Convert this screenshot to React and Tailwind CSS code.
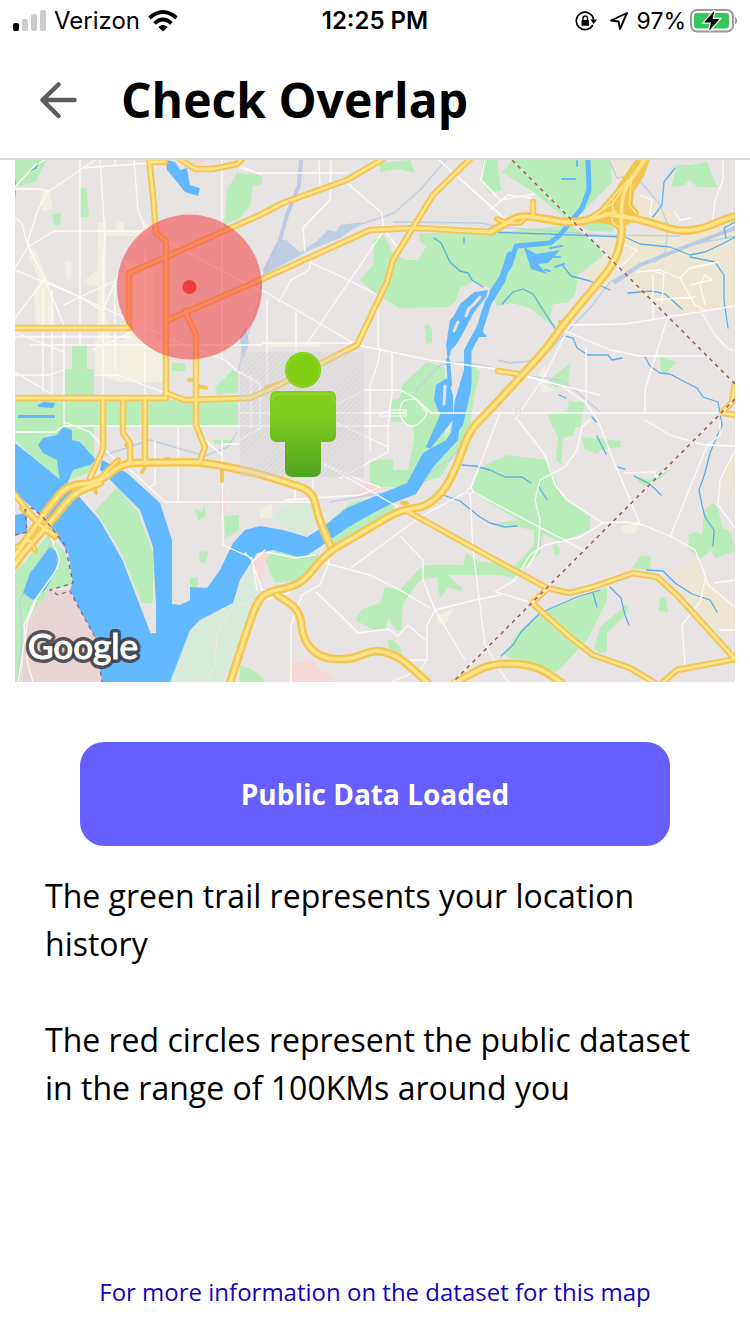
const parks = [
  "M15,160 H47 L35,182 L15,187Z",
  "M80,188 H86 L89,217 H80Z",
  "M52,214 L61,213 L60,226 L54,225Z",
  "M72,344 H87 V369 H94 V395 H65 V369 H72Z",
  "M15,400 H238 V427 H15Z",
  "M15,427 H94 V455 L90,472 L60,484 L54,478 L15,440Z",
  "M227,190 L237,173 L262,175 V184 L253,186 L250,205 L240,218 L224,225 L226,207Z",
  "M172,363 H185 V371 H172Z",
  "M215,387 L233,370 L238,373 V392 L217,395Z",
  "M379,163 L410,160 L415,173 L398,169 L380,172Z",
  "M374,240 L384,235 L392,252 L405,260 L418,260 L426,247 L419,240 L420,233 H490 L570,225 L600,245 L603,256 L578,275 L575,295 L567,303 L553,304 L550,318 L557,328 L548,322 L530,308 L512,303 L497,306 L490,288 L473,282 L460,288 L455,302 L448,307 L400,308 L377,295 L360,280 L373,265Z",
  "M502,172 L513,160 H610 L612,182 L580,215 L570,222 L533,192Z",
  "M483,160 H497 L501,190 L490,194 L481,180Z",
  "M575,222 L615,218 L613,232 L590,231Z",
  "M671,187 L677,165 L690,165 L707,162 L717,187 L697,187 L690,180 L683,186Z",
  "M670,245 L720,250 L718,256 L700,263 L685,256Z",
  "M425,325 L428,324 L432,330 L432,343 L426,344Z",
  "M547,382 L570,363 L568,385 L556,387Z",
  "M548,415 L567,410 L569,400 L575,402 L585,402 L580,427 H552Z",
  "M660,357 L677,362 L667,373 L661,373Z",
  "M391,400 L400,398 L402,385 L427,362 L445,368 V440 L428,460 L407,487 H370 V461 L393,459 V470 H408 L414,440 V428 L402,422 H391Z",
  "M470,362 L480,372 L473,402 L470,430 L455,455 L440,477 L418,484 L450,430Z",
  "M323,527 L350,503 L397,493 L393,510 L333,545Z",
  "M265,560 L275,550 L320,555 L307,580 L275,583Z",
  "M355,620 L362,609 L380,603 L385,587 L400,590 L420,568 L427,565 H463 L466,553 L480,562 L500,563 V575 L448,575 L462,588 L461,592 L448,587 L440,599 L437,577 L420,580 L403,603 L401,631 L396,630 L388,618 L386,630 H374Z",
  "M387,641 L393,640 L401,647 L402,657 L390,650Z",
  "M470,491 L480,468 L492,462 L507,455 L547,460 L563,497 L590,517 V530 L560,542 L535,530Z",
  "M550,420 H578 L573,435 L563,438 L561,465 L556,460 L558,437Z",
  "M582,437 L620,441 L621,447 L600,450 L597,454 L584,449Z",
  "M632,475 L650,480 L664,468 L670,470 L658,480 L645,487Z",
  "M490,524 L520,520 L543,533 L540,553 L513,578 L490,573 V563 L515,566 L534,545 V530 L510,526Z",
  "M552,545 L557,544 L560,551 L556,557Z",
  "M505,655 L517,633 L540,613 L607,587 V600 L587,640 L557,672 L530,668Z",
  "M594,648 L600,627 L627,604 L628,612 L607,633 V652 L600,653Z",
  "M632,568 L641,555 L651,557 L650,571Z",
  "M689,534 L696,532 L708,538 L711,550 L700,559 L688,548Z",
  "M704,513 L712,502 L718,508 L723,528 L731,532 L735,551 L715,558 L702,535Z",
  "M660,598 L666,597 L668,612 L659,611Z",
  "M195,508 L202,512 L205,504 V517 L198,521Z",
  "M224,516 L239,515 V530 L225,539Z",
  "M199,551 L209,552 L205,563 L200,562Z",
  "M190,578 L198,577 V587 H190Z",
  "M214,440 H231 V444 H214Z",
  "M240,665 L253,670 L264,679 V682 H240Z",
  "M15,573 L48,535 L66,553 L73,585 L50,590 L24,625 L20,682 H15Z",
];

const blocks = [
  ["#f2eee1", "M42,190 L49,189 L53,208 L43,211 L40,203Z M98,223 H106 V231 H115 L118,222 H124 V231 H142 L143,222 L150,226 V236 H106 L106,320 L110,325 V342 H98Z M28,247 L36,250 L46,276 L50,290 L54,310 V330 H36 L34,295 L39,280 L29,256Z M65,261 L72,262 L71,280 L66,278Z M85,280 L97,270 L100,285 L90,285Z M95,340 H165 V382 H118 L95,372Z M125,260 L155,270 V340 H125Z M268,342 H320 V347 H268Z M538,375 L546,364 L545,385 L556,390 L541,393Z M260,510 L272,503 V518 H260Z M437,615 L453,609 L446,623 L437,625Z M622,526 L641,521 L635,534 L623,532Z"],
  ["#ece6d2", "M600,240 L625,234 L735,228 V307 L685,313 L640,297 L615,265Z M610,162 H635 L622,185 L614,180Z M634,190 L665,208 L680,222 L633,218Z M672,575 L695,558 L707,580 L735,607 V634 L720,632 L695,605Z M725,465 L735,455 V495 L721,493Z M585,275 L610,250 L618,275 L600,290Z"],
  ["#f6d8d7", "M157,228 L164,220 L172,231 L160,234Z M292,663 L310,660 L337,682 H292Z M193,160 H205 L203,165 H193Z M350,492 L370,482 L378,487 L372,497Z M250,560 L268,548 L262,582 L254,577Z M219,489 H225 V515 H219Z"],
  ["#e8d3d5", "M50,590 L70,590 L80,610 L95,637 L102,682 H22 L25,625Z"],
  ["#d8ead9", "M170,682 L190,630 L233,603 L253,563 L257,600 L230,682Z M272,517 L290,503 H313 L320,520 L307,535 L294,533Z"],
];

const water = [
  "M15,443 L58,478 L80,497 L100,520 L123,560 L151,633 H156 V605 L153,547 L140,510 L117,487 L100,470 L102,460 L127,473 L160,503 L172,540 V604 L180,605 L190,600 V587 L207,588 L220,570 L233,543 L245,530 L260,526 L283,530 L307,537 L323,527 L347,508 L373,497 L407,483 L423,453 L446,440 L460,420 L458,440 L434,466 L416,494 L393,503 L373,513 L347,528 L323,545 L303,558 L273,550 L257,553 L240,580 L233,603 L200,620 L190,630 L170,682 H102 L95,637 L80,610 L70,590 L73,583 L68,553 L53,530 L35,510 L15,493Z",
  "M15,515 L27,513 V533 L15,535Z",
  "M40,560 L50,547 L58,553 L57,570 L45,590 L33,600 L23,593 L30,573Z",
  "M38,445 L43,438 L57,435 L63,427 L72,430 V440 L80,442 L96,460 L90,465 L73,470 L67,484 L60,483 L57,460 L43,453Z",
  "M166,160 L175,162 L180,170 L187,168 L190,185 L200,188 L198,196 L185,192 L177,182 L167,170Z",
  "M524,247 L536,254 L560,250 L548,263 L538,264 L547,274 L531,269Z",
  "M468,302 L475,292 L488,290 L486,297 L474,312 L462,335 L456,345 L451,350 L448,362 L446,345 L450,320Z",
  "M447,378 L453,395 L453,420 L430,449 L426,447 L440,415 L434,400 L436,385Z",
  "M470,348 V370 L471,390 L463,425 L450,443 L455,400 L464,370 V350Z",
  "M478,325 L487,337 L475,337Z",
  "M37,405 L44,402 L55,403 L53,408 L39,407Z M18,415 H55 V418 H18Z",
];

const streams =
  "M434,238 L441,243 L450,262 L460,271 L468,273 L472,280 L483,287 M464,238 V243 M502,304 L513,292 L523,289 L533,294 L545,313 L556,330 M563,266 L571,276 L590,281 L610,290 M490,232 L625,237 L640,244 L670,247 L690,255 L705,252 L722,244 L735,237 M690,257 L715,262 L724,275 L724,300 L728,328 M675,168 L664,182 L662,205 L653,217 M628,293 L652,291 L665,294 L682,309 M566,336 L573,338 L577,348 L588,355 L608,355 L612,360 L622,358 M645,357 L650,366 L660,373 L670,374 L685,382 L697,388 L703,397 L718,402 L722,425 L710,453 L705,473 L699,490 L702,505 L705,517 L714,530 L713,546 M462,465 L475,466 L490,470 L505,477 L522,477 L531,483 M539,487 L547,500 M443,495 L460,501 L480,517 L490,523 L505,527 L517,526 M597,436 L606,454 M618,467 L625,469 M634,476 L650,484 L661,495 M501,656 L513,645 L521,632 L540,613 L577,597 L600,590 M610,587 L621,598 L625,615 L629,625 M593,593 L597,607 M647,570 L663,571 L675,583 L692,594 L710,600 L717,612 M38,162 L36,168 L30,171 M15,180 V195 M735,222 L724,228 L726,238 M559,395 L566,398 M592,417 L596,422";

const rails =
  "M301,160 L299,185 L287,215 L280,240 L265,270 L256,310 L246,340 L238,372 M285,240 L300,253 L325,243 L362,224 L394,213 L420,190 L446,160 M394,222 L480,223 L500,227 L600,235 L680,236 M735,236 L690,245 L640,265 L610,282 L590,308 L540,360 L490,410 L450,460 L400,490 L370,495 L330,502 M610,162 L617,178 L630,176 M635,175 L660,205 L668,225 L665,255 L655,262 M520,375 L560,380 L575,390 L600,412 M414,393 L440,365 L460,362 L490,367 M105,455 L150,440 L205,456 L228,447 L237,432 M82,490 L35,570 L20,600 L22,640 L18,682 M498,360 L510,363 L540,360";

const streets =
  "M15,187 L35,165 L45,160 M15,189 H42 L48,192 L83,168 L95,160 M48,190 L38,210 L28,240 L29,248 L46,282 L64,325 M80,160 V344 M100,160 L102,190 L105,240 L103,260 V395 M115,160 V166 M134,160 L138,211 L148,232 M145,250 V395 M83,168 L150,163 M15,218 L22,223 L28,247 M15,268 L28,247 L54,231 H142 M15,270 L80,297 L130,320 L180,343 L225,360 L237,371 L260,385 M15,318 L44,280 L80,297 L115,281 M64,305 L80,297 L103,311 L118,275 M115,281 V370 M64,330 V426 M43,290 V392 M52,290 V395 M15,332 L64,352 M15,337 H130 M30,345 H262 M92,350 L140,328 M15,372 L50,393 M15,375 H50 L64,370 M95,375 H118 L165,393 M222,160 V360 M170,243 L262,292 M238,165 L262,175 M240,168 L256,173 H347 M331,160 L330,200 L303,228 L305,252 M319,160 L320,186 M347,183 L382,213 L384,230 L398,248 M306,345 L382,233 M262,290 L357,345 L430,360 L490,368 L600,395 M279,302 L291,280 L309,270 L312,255 M309,262 L340,276 L378,295 V345 L380,350 L378,363 L370,385 V450 M267,300 V385 M296,313 V350 M262,343 H357 M241,372 L260,383 V430 M251,375 V428 M240,413 H394 M392,353 V393 L388,427 V452 L340,478 M388,447 L310,410 L285,400 M337,404 L365,390 H400 L412,396 L432,413 M390,413 L405,413 M430,413 H735 M439,160 L508,222 M485,160 L481,180 L500,200 L535,194 M490,210 L508,195 L532,198 M440,161 L500,214 M570,325 L625,324 L650,320 L735,306 M586,348 V402 M563,330 L610,350 L640,356 H705 M668,316 L645,390 V412 M653,275 V320 M655,272 L664,274 L662,303 M700,310 L715,335 L727,348 L735,351 M637,272 L660,270 L680,278 L695,305 L705,310 M650,300 L695,297 M680,278 L690,268 L705,265 L718,262 M690,285 L712,280 L705,275 L700,285 L705,305 M610,260 L625,245 L637,250 L618,270 M640,195 L652,200 L650,215 M675,212 L680,220 L690,218 M723,160 L723,180 L715,200 L712,225 M515,420 L545,375 L560,345 L570,325 M525,375 L560,385 L585,402 L598,420 L613,460 L628,495 L640,525 M500,413 L470,490 L473,550 L485,645 L500,670 M518,420 L545,455 L555,485 L567,500 L603,523 L627,522 L643,525 L670,536 L695,550 L703,570 L708,585 L735,607 M590,420 L582,427 L577,450 L565,467 L540,480 L535,500 L540,520 L538,550 L527,568 M645,420 L670,435 L705,445 L735,446 M720,420 V435 L707,446 L670,537 M735,450 L720,480 L718,505 L735,528 M625,473 L655,472 V477 L670,468 M490,501 L583,550 M603,523 L580,537 L545,545 L530,555 L515,580 L495,592 L503,594 L532,603 M470,490 L420,517 L352,567 M470,490 L490,501 M401,537 L423,560 L423,580 L435,610 L465,660 M325,563 L370,575 L400,590 L430,608 M435,610 L475,600 L500,595 M435,610 L427,625 V660 L410,660 M427,660 L420,670 L400,678 L392,682 M316,592 L340,615 L358,633 L388,629 L398,636 L408,625 L425,640 M330,545 L328,565 L320,585 L302,595 L291,625 V682 M267,552 L295,558 L315,555 M265,550 L252,562 L262,590 L290,590 M245,553 L252,560 L257,590 M222,440 L223,545 L252,558 M15,432 L55,432 L64,426 H390 M64,422 L90,432 L110,455 L127,467 L165,502 H313 M155,440 V484 L150,487 M178,428 V502 M205,440 L222,455 M222,444 H238 M295,480 V500 M313,480 V490 M260,428 L240,440 M285,500 L360,495 L380,487 L365,482 L322,463 M322,463 L398,507 M50,535 L60,560 L55,572 L35,600 L24,625 L28,665 L33,682 M36,600 L28,620 L18,682 M257,602 L290,593 M500,670 L508,682 M720,630 L735,630 M715,583 L735,580 M705,580 L700,602 L682,625 L685,665";

const paleRoads = "M205,682 L215,665 L217,635 L230,610 L240,604 L250,606";

const arterials = [
  [[149, 159], [153, 195], [156, 233], [166, 241], [166, 395]],
  [[150, 162], [165, 162]],
  [[180, 159], [195, 169], [213, 169], [237, 164], [242, 159]],
  [[129, 328], [129, 273], [166, 257], [260, 215], [283, 203], [347, 180], [383, 159]],
  [[15, 328], [130, 328]],
  [[168, 320], [260, 280], [370, 230], [417, 228], [490, 232], [500, 227]],
  [[185, 311], [196, 335], [196, 425], [200, 435], [205, 447], [200, 461]],
  [[15, 398], [166, 398]],
  [[166, 393], [185, 400], [250, 398], [273, 388], [357, 345], [387, 282], [393, 260], [433, 195], [470, 159]],
  [[103, 398], [103, 450], [90, 478]],
  [[123, 398], [123, 433], [130, 443], [130, 462]],
  [[145, 398], [145, 460]],
  [[15, 495], [40, 525], [55, 535]],
  [[407, 511], [490, 557], [547, 588], [570, 593], [593, 587], [633, 573], [657, 577], [677, 595], [736, 660]],
  [[548, 588], [532, 603], [570, 637], [593, 655], [630, 668], [655, 683]],
  [[736, 659], [693, 667], [677, 670], [662, 683]],
  [[735, 384], [732, 402], [722, 413], [736, 415]],
  [[498, 371], [518, 374]],
  [[533, 202], [533, 215]],
];

const freeways = [
  [[490, 232], [503, 225], [520, 215], [545, 219], [570, 223], [590, 220], [615, 212]],
  [[605, 214], [635, 218], [680, 232], [705, 228], [720, 221], [736, 216]],
  [[14, 566], [24, 552], [48, 525], [75, 492], [100, 483]],
  [[15, 556], [43, 515], [67, 485], [98, 483], [123, 463], [200, 462], [233, 468], [260, 474], [313, 491], [318, 517], [330, 545]],
  [[230, 683], [247, 630], [257, 602], [267, 592], [300, 585], [327, 553], [400, 510], [427, 507], [447, 487], [458, 462], [470, 430], [490, 410], [547, 348], [563, 325], [613, 265], [622, 240], [621, 215], [623, 192], [645, 159]],
  [[277, 595], [300, 610], [303, 640], [320, 658], [350, 660], [373, 650], [390, 653], [404, 661], [428, 683]],
  [[455, 683], [487, 665], [517, 663], [540, 668], [562, 683]],
];

const ramps =
  "M497,219 L507,223 L520,223 L527,216 M590,218 L613,203 L640,165 M588,220 L600,212 L628,180 M613,200 L612,222 L623,230 M632,176 L629,205 L636,213 M78,486 L100,478 L118,460 M22,508 L45,530 L55,537 M15,548 L30,540 L35,550";

function roundedPath(points) {
  const radius = 14;
  const [first, ...rest] = points;
  let d = `M${first[0]},${first[1]}`;
  rest.forEach(([x, y], i) => {
    const next = rest[i + 1];
    if (!next) {
      d += ` L${x},${y}`;
      return;
    }
    const [px, py] = points[i];
    const before = Math.hypot(x - px, y - py);
    const after = Math.hypot(next[0] - x, next[1] - y);
    const a = Math.min(radius, before / 2) / before;
    const b = Math.min(radius, after / 2) / after;
    d += ` L${x + (px - x) * a},${y + (py - y) * a} Q${x},${y} ${x + (next[0] - x) * b},${y + (next[1] - y) * b}`;
  });
  return d;
}

const arterialPaths = arterials.map((points) => `M${points.map((p) => p.join(",")).join(" L")}`);
const freewayPaths = freeways.map(roundedPath);

function MapView() {
  return (
    <svg viewBox="15 160 720 522" className="block w-full" role="img" aria-label="Map of your location history and public data">
      <defs>
        <pattern id="hatch" width="4" height="4" patternUnits="userSpaceOnUse" patternTransform="rotate(45)">
          <rect width="4" height="4" fill="#d4d2d2" fillOpacity=".35" />
          <rect width="1" height="4" fill="#c0bebe" fillOpacity=".25" />
        </pattern>
        <linearGradient id="person" x1="0" y1="352" x2="0" y2="478" gradientUnits="userSpaceOnUse">
          <stop offset="0" stopColor="#80d010" />
          <stop offset=".5" stopColor="#82cc20" />
          <stop offset="1" stopColor="#4ca31c" />
        </linearGradient>
      </defs>
      <rect x="15" y="160" width="720" height="522" fill="#e8e4e4" />
      {parks.map((d) => <path key={d} d={d} fill="#b8edb9" />)}
      {blocks.map(([fill, d]) => <path key={d} d={d} fill={fill} />)}
      <path d="M281,240 L285,240 L300,253 L318,240 L328,230 L336,232 L340,225 L363,222 L340,238 L310,250 L262,276Z" fill="#bccfe4" />
      <path d="M240,337 L246,325 L249,345 L242,360Z" fill="#bccfe4" />
      <g fill="none" strokeLinejoin="round" strokeLinecap="round">
        <path d={rails} stroke="#c2cfe2" strokeWidth="1.400" />
        <path d="M301,160 L299,185 L287,215 L280,240 L265,270 M735,228 L690,245 L640,265 L615,282" stroke="#bccbe2" strokeWidth="4" />
        {water.map((d) => <path key={d} d={d} fill="#62b9ff" />)}
        <path d="M588,160 L589,190 L582,208 L560,235 L550,243 L516,246 L510,265 L492,292" stroke="#62b9ff" strokeWidth="5" />
        <path d="M510,255 L502,280 L488,303 L480,328 L468,350 V385" stroke="#62b9ff" strokeWidth="7" />
        <path d="M475,294 L462,305 L453,322 M448,360 L450,385" stroke="#62b9ff" strokeWidth="4" />
        <path d="M480,297 L474,304 L468,310 M458,322 L454,331 M445,386 L444,404 M469,308 L466,316" stroke="#e8e4e4" strokeWidth="3" />
        <path d="M550,248 L562,246 M548,257 L560,257 M555,267 L564,264 M545,270 L550,271 M562,179 L575,179 M577,161 V166" stroke="#62b9ff" strokeWidth="2" />
        <path d="M95,510 L117,488 L137,510 L153,553 V603 H142 L120,550Z" fill="#b8edb9" />
        <path d="M78,495 L100,470 L117,487 L95,510Z" fill="#e8e4e4" />
        <path d="M142,604 H156 V633 H152Z" fill="#e8e4e4" />
        <path d="M80,497 L100,520 L123,560 L151,633" stroke="#e8e4e4" strokeWidth="1" />
        <path d={streams} stroke="#5faee8" strokeWidth="1.300" />
        <path d={streets} stroke="#fffafa" strokeWidth="1.300" />
        <path d={paleRoads} stroke="#f0eadb" strokeWidth="1.200" />
        <path d="M405,400 C398,405 398,420 408,425 C416,430 427,416 427,412 L416,399Z M380,413 V416 H406 V410 H392Z" stroke="#fffafa" strokeWidth="1.200" />
        <circle cx="470" cy="491" r="3" fill="#e8e4e4" stroke="#fffafa" />
        <circle cx="518" cy="411" r="3" stroke="#f1cfd4" />
        <path d="M588,221 L612,202 L618,185 L636,159 H650 L644,176 L634,192 L632,210 L640,219 L627,225 H612Z" fill="#f3c654" />
        {arterialPaths.map((d) => <path key={d} d={d} stroke="#f2c55c" strokeWidth="6.500" />)}
        {freewayPaths.map((d) => <path key={d} d={d} stroke="#f3c654" strokeWidth="8.500" />)}
        <path d={ramps} stroke="#f3c654" strokeWidth="6" />
        <path d="M266,387 L277,384 M402,503 L407,503 M92,480 L96,493 M166,459 H169 M189,380 H192 M196,386 L206,388 M126,445 H132 M142,472 L145,467 M560,322 H566 M222,468 V481 M540,217 H548" stroke="#f2c55c" strokeWidth="4" />
        {arterialPaths.map((d) => <path key={d} d={d} stroke="#ffe384" strokeWidth="2.800" />)}
        {freewayPaths.map((d) => <path key={d} d={d} stroke="#ffe384" strokeWidth="3.600" />)}
        <path d={ramps} stroke="#ffe384" strokeWidth="1.500" />
        <path d="M512,160 L735,384 M735,399 L453,682" stroke="#fff" strokeOpacity=".5" strokeWidth="1.800" />
        <path d="M512,160 L735,384 M735,399 L453,682" stroke="#a85f5f" strokeWidth="1.600" strokeLinecap="butt" strokeDasharray="4 4" />
        <path d="M15,535 L27,532 L25,510 L32,508 L42,516 L65,545 L73,583 L50,590 L58,595 L70,591 L80,610 L95,637 L102,682" stroke="#a06480" strokeWidth="1.400" strokeLinecap="butt" strokeDasharray="4 4" />
      </g>
      <rect x="240" y="352" width="124" height="125" fill="url(#hatch)" />
      <circle cx="189.500" cy="287" r="72.500" fill="#f44343" fillOpacity=".56" />
      <circle cx="189.500" cy="287" r="7" fill="#f03c3c" />
      <g fill="url(#person)">
        <circle cx="303" cy="370" r="18" />
        <path d="M276,391 H330 Q336,391 336,398 V435 Q336,442 329,442 H321 V469 Q321,477 313,477 H293 Q285,477 285,469 V442 H277 Q270,442 270,435 V398 Q270,391 276,391Z" />
      </g>
      <path d="M272,402 Q272,394 279,394 H327 Q334,394 334,402" fill="none" stroke="#a0de50" strokeOpacity=".8" />
      <circle cx="303" cy="370" r="16.500" fill="none" stroke="#a0de50" strokeOpacity=".5" />
      <text x="28" y="659" className="font-['Lato',sans-serif] text-[35px] font-normal" fill="#fff" stroke="#3c3c40" strokeOpacity=".85" strokeWidth="8" strokeLinejoin="round" paintOrder="stroke">
        Google
      </text>
      <text x="28" y="659" className="font-['Lato',sans-serif] text-[35px] font-normal" fill="#fff" stroke="#fff" strokeWidth="1" aria-hidden="true">
        Google
      </text>
    </svg>
  );
}

function StatusBar() {
  return (
    <div className="grid h-[42px] grid-cols-3 items-center px-3 font-['Inter',sans-serif] text-2xl text-black">
      <div className="flex items-center gap-2">
        <svg viewBox="0 0 34 22" className="h-[22px] w-[34px]" aria-hidden="true">
          <rect x="1" y="13" width="6" height="8" rx="2" fill="#000" />
          <rect x="10" y="9" width="6" height="12" rx="2" fill="#ccc" />
          <rect x="19" y="4" width="6" height="17" rx="2" fill="#ccc" />
          <rect x="28" y="0" width="6" height="21" rx="2" fill="#ccc" />
        </svg>
        <span>Verizon</span>
        <svg viewBox="0 0 30 22" className="h-[22px] w-[30px]" aria-hidden="true">
          <g fill="none" stroke="#000" strokeWidth="3.800">
            <path d="M1.500,8 Q15,-4 28.500,8" />
            <path d="M6.500,13.300 Q15,5.800 23.500,13.300" />
          </g>
          <path d="M10.300,17 Q15,13 19.700,17 L15,21.600Z" />
        </svg>
      </div>
      <div className="text-center font-semibold whitespace-nowrap">12:25 PM</div>
      <div className="flex items-center justify-end gap-1">
        <svg viewBox="0 0 22 20" className="mr-2 h-5 w-[22px]" aria-hidden="true">
          <path d="M17.800,13.800 A8.700,8.700 0 1 1 18.600,8.500" fill="none" stroke="#000" strokeWidth="1.700" />
          <path d="M15.300,8.500 H22 L18.700,13Z" />
          <rect x="6.500" y="9" width="7.500" height="5.800" rx=".8" />
          <path d="M8,9 V7.200 A2.200,2.200 0 0 1 12.500,7.200 V9" fill="none" stroke="#000" strokeWidth="1.400" />
        </svg>
        <svg viewBox="0 0 20 20" className="mr-1 h-5 w-5" aria-hidden="true">
          <path d="M18,2 L2,9.500 L9.500,10.500 L11,18Z" fill="none" stroke="#000" strokeWidth="1.900" strokeLinejoin="round" />
        </svg>
        <span className="text-[23px]">97%</span>
        <svg viewBox="0 0 48 24" className="h-6 w-12" aria-hidden="true">
          <rect x="1" y="1" width="42" height="21.500" rx="6" fill="#fff" stroke="#9a9a9a" strokeWidth="2" />
          <rect x="4" y="4" width="35" height="15.500" rx="3" fill="#35c759" />
          <path d="M45.500,8.500 Q48,11.700 45.500,15Z" fill="#9a9a9a" stroke="#9a9a9a" />
          <path d="M24.500,1.500 L14,13.500 H21 L19,22 L29.500,10 H22.500Z" fill="#000" stroke="#fff" strokeWidth="2.400" paintOrder="stroke" />
        </svg>
      </div>
    </div>
  );
}

export default function App() {
  return (
    <div className="flex min-h-screen flex-col bg-white font-['Open_Sans',sans-serif] text-black">
      <StatusBar />
      <header className="flex h-[118px] items-center gap-11 border-b-2 border-[#d8d8da] pl-10">
        <button type="button" aria-label="Back" className="block">
          <svg viewBox="0 0 37 37" className="h-[37px] w-[37px]" fill="none" stroke="#5c5c5c" strokeWidth="4.500" strokeLinecap="round" strokeLinejoin="round" aria-hidden="true">
            <path d="M34.500,18 H2.500 M18.500,2.500 L2.500,18 L18.500,34" />
          </svg>
        </button>
        <h1 className="text-5xl font-bold">Check Overlap</h1>
      </header>
      <main className="flex grow flex-col">
        <div className="px-[15px]">
          <MapView />
        </div>
        <button type="button" className="mx-20 mt-[60px] h-[104px] rounded-3xl bg-[#665eff] text-[28px] font-bold text-white">
          Public Data Loaded
        </button>
        <div className="mt-[26px] flex flex-col gap-12 px-[45px] text-[32px] leading-[48px]">
          <p>The green trail represents your location history</p>
          <p>The red circles represent the public dataset in the range of 100KMs around you</p>
        </div>
        <a href="#dataset" className="mt-auto pb-6 text-center text-2xl leading-9 text-[#1404b8]">
          For more information on the dataset for this map
        </a>
      </main>
    </div>
  );
}
